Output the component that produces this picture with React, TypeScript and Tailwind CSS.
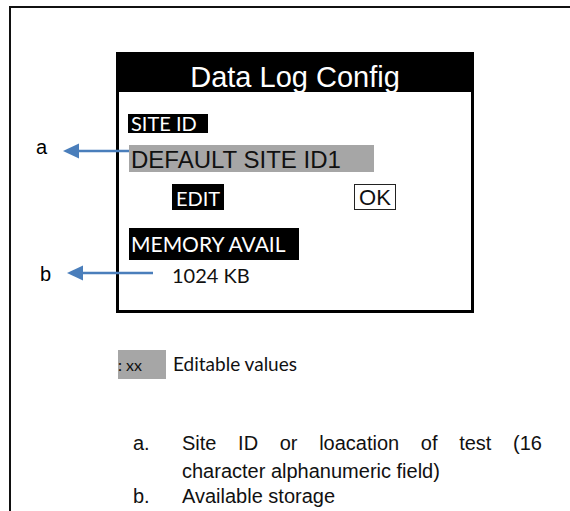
import type { ReactNode } from 'react';

const arial = "font-['Liberation_Sans',Arial,sans-serif]";
const calibri = "font-['Lato','Open_Sans',sans-serif]";

function Arrow({ width }: { width: number }) {
  return (
    <svg width={width} height={16} viewBox={`0 0 ${width} 16`}>
      <line x1={14} y1={8} x2={width} y2={8} stroke="#4a7ebb" strokeWidth={2.5} />
      <polygon points="0,8 16,0.5 16,15.5" fill="#4a7ebb" />
    </svg>
  );
}

function NoteItem({ mark, children }: { mark: string; children: ReactNode }) {
  return (
    <div className="flex">
      <span className="w-[49px] shrink-0">{mark}</span>
      <div className="w-[360px]">{children}</div>
    </div>
  );
}

export default function App() {
  return (
    <div className="w-[570px] h-[511px] overflow-hidden bg-white pt-[6px] pl-[9px]">
      <div className="relative h-[520px] border-l-2 border-t-2 border-[#111] pl-[105px] pt-[44px]">
        {/* annotation arrows */}
        <span className={`absolute left-[25px] top-[129px] text-[20px] leading-[20px] text-black ${arial}`}>a</span>
        <div className="absolute left-[52px] top-[135px] flex">
          <Arrow width={66} />
        </div>
        <span className={`absolute left-[29px] top-[256px] text-[20px] leading-[20px] text-black ${arial}`}>b</span>
        <div className="absolute left-[56px] top-[257px] flex">
          <Arrow width={86} />
        </div>

        {/* device screen */}
        <div className="w-[358px]">
          <div className={`h-[40px] bg-black pt-[11px] text-center text-[29px] leading-[29px] text-white ${arial}`}>
            Data Log Config
          </div>
          <div className={`flex h-[221px] flex-col items-start border-x-[3px] border-b-[3px] border-black pl-[9px] ${calibri}`}>
            <div className="mt-[22px] h-[19px] w-[80px] bg-black pl-[3px] text-[20px] leading-[19px] text-white">SITE ID</div>
            <div className={`ml-[1px] mt-[12px] h-[27px] w-[245px] bg-[#a6a6a6] pl-[2px] text-[24px] leading-[29px] text-[#111] ${arial}`}>
              DEFAULT SITE ID1
            </div>
            <div className="mt-[12px] flex h-[26px] items-stretch">
              <div className="ml-[44px] w-[52px] bg-black pl-[4px] text-[20px] leading-[28px] text-white">EDIT</div>
              <div className={`ml-[130px] w-[42px] border border-[#222] text-center text-[22px] leading-[26px] text-[#111] ${arial}`}>OK</div>
            </div>
            <div className="ml-[1px] mt-[18px] h-[32px] w-[170px] bg-black pl-[2px] text-[21px] leading-[32px] text-white">MEMORY AVAIL</div>
            <div className="ml-[44px] mt-[5px] text-[20px] leading-[20px] text-[#111]">1024 KB</div>
          </div>
        </div>

        {/* legend */}
        <div className={`mt-[36px] flex items-center ${calibri}`}>
          <div className="ml-[2px] h-[29px] w-[48px] bg-[#a6a6a6] text-[16px] leading-[30px] text-[#111]">: xx</div>
          <span className="ml-[7px] text-[19px] leading-[30px] text-[#111]">Editable values</span>
        </div>

        {/* notes */}
        <div className={`ml-[17px] mt-[50px] text-[20px] leading-[28px] text-[#111] ${arial}`}>
          <NoteItem mark="a.">
            <div className="flex justify-between">
              <span>Site</span>
              <span>ID</span>
              <span>or</span>
              <span>loacation</span>
              <span>of</span>
              <span>test</span>
              <span>(16</span>
            </div>
            <div>character alphanumeric field)</div>
          </NoteItem>
          <div className="leading-[22px]">
            <NoteItem mark="b.">Available storage</NoteItem>
          </div>
        </div>
      </div>
    </div>
  );
}
